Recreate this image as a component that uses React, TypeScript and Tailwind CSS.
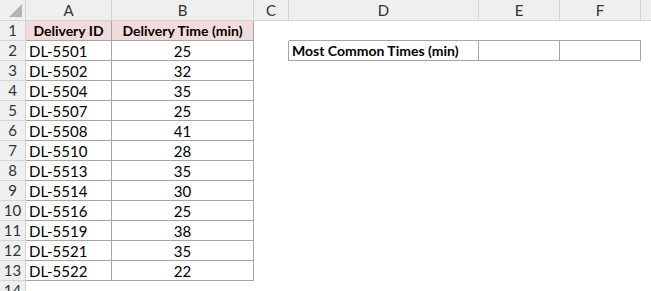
import React from "react";

const rows: [string, number][] = [
  ["DL-5501", 25],
  ["DL-5502", 32],
  ["DL-5504", 35],
  ["DL-5507", 25],
  ["DL-5508", 41],
  ["DL-5510", 28],
  ["DL-5513", 35],
  ["DL-5514", 30],
  ["DL-5516", 25],
  ["DL-5519", 38],
  ["DL-5521", 35],
  ["DL-5522", 22],
];

const colHead = "h-[21px] bg-[#efefef] border-r border-b border-[#d4d4d4] flex items-center justify-center text-[#333] text-[15px]";
const rowHead = "h-[20px] bg-[#efefef] border-r border-b border-[#d4d4d4] flex items-center justify-center text-[#333] text-[15px]";
const cell = "h-[20px] border-r border-b border-[#a6a6a6] flex items-center pt-[1px]";

const App = () => {
  return (
    <div className="w-[651px] h-[291px] bg-white overflow-hidden font-['Lato','Liberation_Sans',sans-serif] text-black leading-none">
      <div className="grid grid-cols-[26px_86px_142px_35px_190px_81px_81px_1fr]">
        {/* column headers */}
        <div className="h-[21px] bg-[#efefef] border-r border-b border-[#d4d4d4] relative">
          <svg className="absolute right-[3px] bottom-[3px]" width="13" height="13" viewBox="0 0 13 13">
            <polygon points="13,0 13,13 0,13" fill="#b4b4b4" />
          </svg>
        </div>
        <div className={colHead}>A</div>
        <div className={colHead}>B</div>
        <div className={colHead}>C</div>
        <div className={colHead}>D</div>
        <div className={colHead}>E</div>
        <div className={colHead}>F</div>
        <div className="h-[21px] bg-[#efefef] border-b border-[#d4d4d4]"></div>

        {/* row 1 */}
        <div className={rowHead}>1</div>
        <div className={`${cell} bg-[#f2dcdb] justify-center font-bold text-[14px]`}>Delivery ID</div>
        <div className={`${cell} bg-[#f2dcdb] justify-center font-bold text-[14px]`}>Delivery Time (min)</div>
        <div className="h-[20px]"></div>
        <div className="h-[20px] border-b border-[#a6a6a6]"></div>
        <div className="h-[20px] border-b border-[#a6a6a6]"></div>
        <div className="h-[20px] border-b border-[#a6a6a6]"></div>
        <div className="h-[20px]"></div>

        {rows.map(([id, t], i) => (
          <React.Fragment key={id}>
            <div className={rowHead}>{i + 2}</div>
            <div className={`${cell} pl-[3px] text-[15px]`}>{id}</div>
            <div className={`${cell} justify-center text-[15px]`}>{t}</div>
            {i === 0 ? (
              <>
                <div className="h-[20px] border-r border-[#a6a6a6]"></div>
                <div className={`${cell} pl-[3px] font-bold text-[14px]`}>Most Common Times (min)</div>
                <div className={cell}></div>
                <div className={cell}></div>
              </>
            ) : (
              <>
                <div className="h-[20px]"></div>
                <div className="h-[20px]"></div>
                <div className="h-[20px]"></div>
                <div className="h-[20px]"></div>
              </>
            )}
            <div className="h-[20px]"></div>
          </React.Fragment>
        ))}

        {/* row 14 */}
        <div className={rowHead}>14</div>
      </div>
    </div>
  );
};

export default App;
